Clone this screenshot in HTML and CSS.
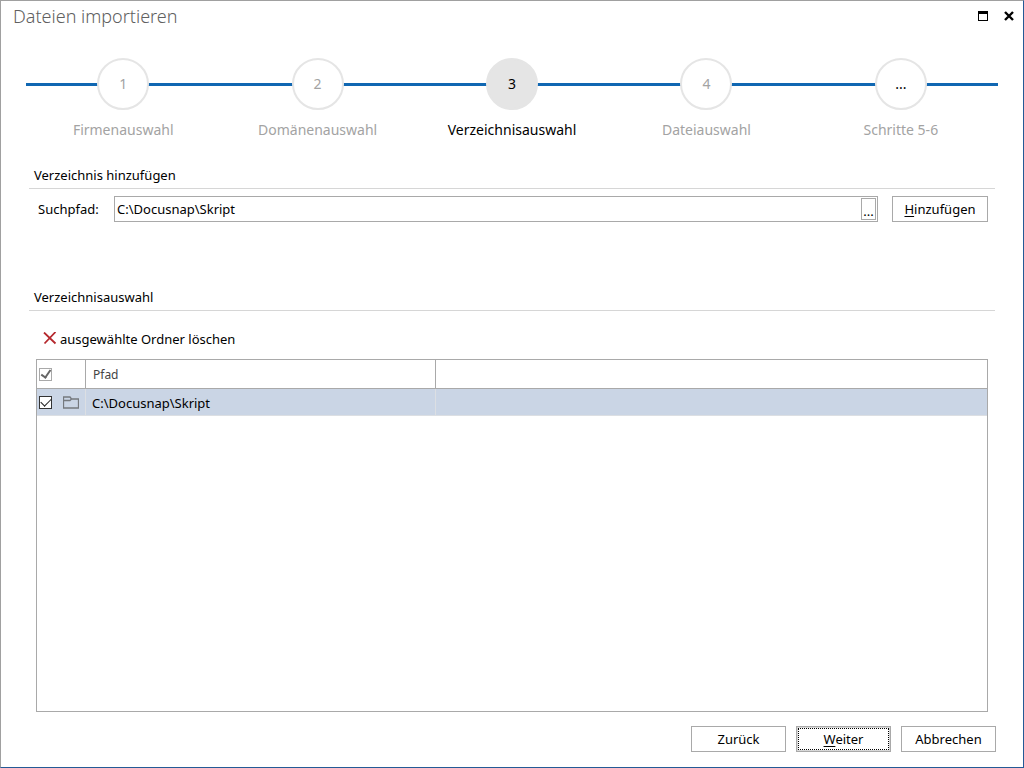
FILE: index.html
```html
<!DOCTYPE html>
<html lang="de">
<head>
<meta charset="utf-8">
<title>Dateien importieren</title>
<link rel="stylesheet" href="styles.css">
</head>
<body>
<main class="window">
  <header class="titlebar">
    <h1 class="title">Dateien importieren</h1>
    <div class="window-controls">
      <button class="icon-button" type="button" aria-label="Maximieren">
        <svg width="10" height="10" viewBox="0 0 10 10" shape-rendering="crispEdges"><path d="M0 0H10V10H0ZM1 3V9H9V3Z" fill="#000" fill-rule="evenodd"/></svg>
      </button>
      <button class="icon-button" type="button" aria-label="Schließen">
        <svg width="10" height="10" viewBox="0 0 10 10"><path d="M1 1L9 9M9 1L1 9" stroke="#000" stroke-width="2.4" fill="none"/></svg>
      </button>
    </div>
  </header>

  <ol class="steps">
    <li class="step"><span class="step-circle">1</span><span class="step-label">Firmenauswahl</span></li>
    <li class="step"><span class="step-circle">2</span><span class="step-label">Domänenauswahl</span></li>
    <li class="step step-current" aria-current="step"><span class="step-circle">3</span><span class="step-label">Verzeichnisauswahl</span></li>
    <li class="step"><span class="step-circle">4</span><span class="step-label">Dateiauswahl</span></li>
    <li class="step step-more"><span class="step-circle">...</span><span class="step-label">Schritte 5-6</span></li>
  </ol>

  <section class="section add-section">
    <h2 class="section-title">Verzeichnis hinzufügen</h2>
    <div class="path-row">
      <label class="path-label" for="path">Suchpfad:</label>
      <div class="path-field">
        <input class="path-input" id="path" type="text" value="C:\Docusnap\Skript">
        <button class="browse" type="button" aria-label="Durchsuchen">...</button>
      </div>
      <button class="button button-add" type="button"><u>H</u>inzufügen</button>
    </div>
  </section>

  <section class="section list-section">
    <h2 class="section-title">Verzeichnisauswahl</h2>
    <button class="delete" type="button">
      <svg width="14" height="14" viewBox="0 0 14 14"><path d="M1 .5L12.500 11.500M12.500 0L1.500 11.500" stroke="#b5282d" stroke-width="1.8" fill="none"/></svg>
      <span>ausgewählte Ordner löschen</span>
    </button>
    <div class="grid">
      <table class="table">
        <colgroup><col class="col-check"><col class="col-path"><col></colgroup>
        <thead>
          <tr>
            <th><div class="check-cell"><input class="check check-all" type="checkbox" checked aria-label="Alle auswählen"></div></th>
            <th>Pfad</th>
            <th></th>
          </tr>
        </thead>
        <tbody>
          <tr>
            <td><div class="check-cell"><input class="check" type="checkbox" checked aria-label="C:\Docusnap\Skript auswählen">
              <svg width="16" height="13" viewBox="0 0 16 13"><path d="M.5 12V1H7L8.500 3H15.500V12ZM.5 4.500H7L8.500 3" fill="none" stroke="#75797e" stroke-width="1.300"/></svg></div></td>
            <td>C:\Docusnap\Skript</td>
            <td></td>
          </tr>
        </tbody>
      </table>
    </div>
  </section>

  <footer class="footer">
    <button class="button" type="button">Zurück</button>
    <button class="button button-default" type="button"><u>W</u>eiter</button>
    <button class="button" type="button">Abbrechen</button>
  </footer>
</main>
</body>
</html>
```
FILE: styles.css
```css
* {
  box-sizing: border-box;
}

body {
  margin: 0;
  background: #fff;
  color: #000;
  font: 13px/18px "Noto Sans", "Open Sans", sans-serif;
}

button,
input {
  font: inherit;
  color: inherit;
  margin: 0;
}

.window {
  display: flex;
  flex-direction: column;
  min-height: 100vh;
  border: 1px solid;
  border-color: #a0a0a0 #245a96 #245a96 #a0a0a0;
}

.titlebar {
  display: flex;
  justify-content: space-between;
  align-items: center;
  height: 30px;
  padding: 0 7px 0 12px;
}

.title {
  margin: 0;
  font-size: 18px;
  line-height: 24px;
  font-weight: 300;
  color: #606060;
}

.window-controls {
  display: flex;
  gap: 12px;
}

.icon-button {
  display: flex;
  padding: 2px;
  border: 0;
  background: none;
}

/* Wizard steps */
.steps {
  display: flex;
  margin: 27px 25px 0;
  padding: 0;
  list-style: none;
  color: #a3a3a3;
  font-size: 14px;
  background: linear-gradient(#1067b2, #1067b2) 0 25px / 100% 3px no-repeat;
}

.step {
  flex: 1;
  display: flex;
  flex-direction: column;
  align-items: center;
  gap: 10px;
  line-height: 20px;
}

.step-circle {
  display: flex;
  align-items: center;
  justify-content: center;
  width: 52px;
  height: 52px;
  border: 2px solid #e5e5e5;
  border-radius: 50%;
  background: #fff;
}

.step-current {
  color: #000;
}

.step-current .step-circle {
  background: #e5e5e5;
}

.step-more .step-circle {
  color: #000;
}

/* Sections */
.section {
  padding: 0 28px;
}

.section-title {
  margin: 0;
  padding: 0 5px 4px;
  border-bottom: 1px solid #d6d6d6;
  font-size: 13px;
  line-height: 18px;
  font-weight: 400;
}

.add-section {
  margin-top: 26px;
}

.path-row {
  display: flex;
  align-items: center;
  padding: 7px 7px 0 9px;
}

.path-label {
  width: 76px;
}

.path-field {
  flex: 1;
  display: flex;
  height: 26px;
  margin-right: 14px;
  padding: 1px;
  border: 1px solid #a9a9a9;
}

.path-input {
  flex: 1;
  min-width: 0;
  padding: 0 1px;
  border: 0;
  outline: 0;
  background: none;
}

.browse {
  width: 15px;
  padding: 4px 0 0;
  border: 1px solid #a9a9a9;
  background: #fff;
  line-height: 16px;
}

.button {
  min-width: 95px;
  height: 26px;
  padding: 0 8px;
  border: 1px solid #a9a9a9;
  background: #fff;
}

.button-add {
  min-width: 96px;
}

.button u {
  text-underline-offset: 2px;
}

.button-default {
  box-shadow: inset 0 0 0 1px #d8d8d8;
  outline: 1px dotted #000;
  outline-offset: -3px;
}

.list-section {
  flex: 1;
  display: flex;
  flex-direction: column;
  margin-top: 66px;
}

.delete {
  display: flex;
  align-items: center;
  align-self: flex-start;
  gap: 3px;
  margin: 19px 0 11px 14px;
  padding: 0;
  border: 0;
  background: none;
}

.grid {
  flex: 1;
  margin: 0 7px;
  border: 1px solid #a9a9a9;
}

.table {
  width: 100%;
  table-layout: fixed;
  border-collapse: separate;
  border-spacing: 0;
}

.col-check {
  width: 49px;
}

.col-path {
  width: 350px;
}

.table th,
.table td {
  padding: 2px 6px 0;
  text-align: left;
}

.table th {
  height: 29px;
  padding-left: 7px;
  border-right: 1px solid #a9a9a9;
  border-bottom: 1px solid #a9a9a9;
  color: #444;
  font-size: 12px;
  font-weight: 400;
}

.table td {
  height: 27px;
  border-right: 1px solid #dcdfe3;
  border-bottom: 1px solid #dcdfe3;
  background: #cad5e5;
}

.table th:last-child,
.table td:last-child {
  border-right: 0;
}

.table th:first-child,
.table td:first-child {
  padding: 0 2px;
}

.check-cell {
  display: flex;
  align-items: center;
  gap: 11px;
}

.check {
  appearance: none;
  display: grid;
  place-items: center;
  width: 13px;
  height: 13px;
  border: 1px solid #333;
  background: #fff;
}

.check:checked::before {
  content: "";
  width: 9px;
  height: 5px;
  margin-bottom: 3px;
  border: solid #222;
  border-width: 0 0 1px 1px;
  transform: rotate(-45deg);
}

.check-all {
  border-color: #a9a9a9;
}

.check-all:checked::before {
  width: 8px;
  height: 4px;
  margin-bottom: 2px;
  border-color: #666;
  border-width: 0 0 2px 2px;
  transform: rotate(-55deg);
}

.footer {
  display: flex;
  justify-content: flex-end;
  gap: 10px;
  padding: 14px 27px 15px;
}
```
